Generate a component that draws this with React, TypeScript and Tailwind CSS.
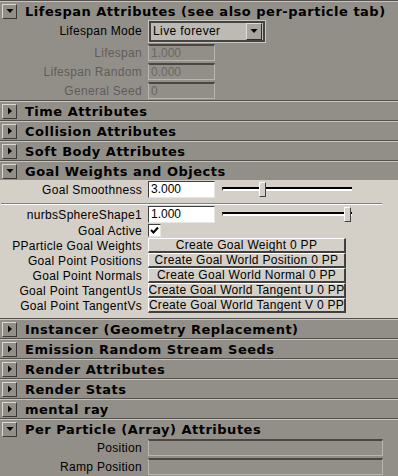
import React from 'react';

const panel = 'bg-[#928f89]';

function Arrow({ open }: { open: boolean }) {
  return (
    <svg width="8" height="8" viewBox="0 0 8 8">
      {open ? <path d="M0.5 2h7L4 6z" fill="#000" /> : <path d="M2 0.5v7L6 4z" fill="#000" />}
    </svg>
  );
}

function Header({ title, open = false }: { title: string; open?: boolean }) {
  return (
    <div className={`h-[20px] border-t border-[#55524e] ${panel}`}>
      <div className="h-[19px] border-t border-[#c7c4be] flex items-center pl-[2px]">
        <div className="w-[15px] h-[15px] border border-t-[#dcd9d3] border-l-[#dcd9d3] border-b-[#3a3835] border-r-[#3a3835] flex items-center justify-center">
          <Arrow open={open} />
        </div>
        <span className="ml-[8px] font-['DejaVu_Sans',Verdana,sans-serif] text-[13px] font-bold tracking-[0.5px] text-black leading-none whitespace-nowrap">
          {title}
        </span>
      </div>
    </div>
  );
}

function Row({ label, dim = false, h = 'h-[17px]', children }: { label: string; dim?: boolean; h?: string; children?: React.ReactNode }) {
  return (
    <div className={`flex items-center ${h}`}>
      <div className={`w-[142px] text-right whitespace-nowrap tracking-[0.3px] ${dim ? 'text-[#605d59]' : 'text-black'}`}>
        {label}
      </div>
      <div className="ml-[6px] h-full flex items-center">{children}</div>
    </div>
  );
}

function DimField({ value = '', w = 'w-[67px]' }: { value?: string; w?: string }) {
  return (
    <div className={`${w} h-[17px] border-t-2 border-t-[#4a4743] border-l border-l-[#b9b6b0] border-r border-r-[#b9b6b0] border-b border-b-[#b9b6b0] text-[#6a6762] pl-[2px] leading-[14px]`}>
      {value}
    </div>
  );
}

function WhiteField({ value }: { value: string }) {
  return (
    <div className="w-[67px] h-[17px] bg-white border border-t-[#404040] border-l-[#404040] border-r-[#e8e6e1] border-b-[#e8e6e1] pl-[2px] leading-[15px] text-black">
      {value}
    </div>
  );
}

function Slider({ pos }: { pos: number }) {
  return (
    <div className="relative w-[130px] h-[16px] ml-[7px]">
      <div className="absolute left-0 right-0 top-[5px] h-[4px] border-t-2 border-t-black border-l border-l-[#404040] bg-white border-b border-b-white" />
      <div
        className="absolute top-0 w-[7px] h-[15px] bg-[#d4d0c8] border border-t-white border-l-white border-r-[#404040] border-b-[#404040]"
        style={{ left: pos }}
      />
    </div>
  );
}

function Btn({ children }: { children: React.ReactNode }) {
  return (
    <div className="w-[198px] h-[15px] bg-[#d4d0c8] border border-t-white border-l-white border-r-2 border-b-2 border-r-[#404040] border-b-[#404040] flex items-center justify-center overflow-hidden whitespace-nowrap text-black tracking-[0.3px] leading-none">
      {children}
    </div>
  );
}

export default function App() {
  return (
    <div className={`w-[398px] h-[476px] overflow-hidden ${panel} font-['Liberation_Sans',Arial,sans-serif] text-[12px]`}>
      <Header title="Lifespan Attributes (see also per-particle tab)" open />
      <div className="flex flex-col gap-[2px] pb-[1px]">
        <Row label="Lifespan Mode" h="h-[22px]">
          <div className="w-[118px] h-[23px] border border-[#c9c6c0] flex">
            <div className="flex-1 flex items-center bg-[#bdbab4] border-2 border-[#444]">
              <span className="pl-[2px] text-black tracking-[0.4px]">Live forever</span>
              <div className="ml-auto mr-[1px] w-[16px] h-[17px] bg-[#a8a59f] border border-t-[#e0ddd7] border-l-[#e0ddd7] border-r-[#2f2d2a] border-b-[#2f2d2a] flex items-center justify-center">
                <Arrow open />
              </div>
            </div>
          </div>
        </Row>
        <Row label="Lifespan" dim>
          <DimField value="1.000" />
        </Row>
        <Row label="Lifespan Random" dim>
          <DimField value="0.000" />
        </Row>
        <Row label="General Seed" dim>
          <DimField value="0" />
        </Row>
      </div>
      <Header title="Time Attributes" />
      <Header title="Collision Attributes" />
      <Header title="Soft Body Attributes" />
      <Header title="Goal Weights and Objects" open />
      <div className="bg-[#d4d0c8] pt-[1px] h-[138px] flex flex-col">
        <Row label="Goal Smoothness">
          <WhiteField value="3.000" />
          <Slider pos={37} />
        </Row>
        <div className="mt-[5px] mb-[1px] ml-[1px] w-[381px] border-t border-t-[#808080] border-b border-b-white" />
        <Row label="nurbsSphereShape1">
          <WhiteField value="1.000" />
          <Slider pos={122} />
        </Row>
        <Row label="Goal Active" h="h-[15px]">
          <div className="w-[13px] h-[13px] bg-white border border-t-[#404040] border-l-[#404040] border-r-[#e8e6e1] border-b-[#e8e6e1] flex items-center justify-center">
            <svg width="9" height="9" viewBox="0 0 9 9">
              <path d="M1 4l2.5 2.5L8 1.5" stroke="#000" strokeWidth="2" fill="none" />
            </svg>
          </div>
        </Row>
        <Row label="PParticle Goal Weights" h="h-[15px]">
          <Btn>Create Goal Weight 0 PP</Btn>
        </Row>
        <Row label="Goal Point Positions" h="h-[15px]">
          <Btn>Create Goal World Position 0 PP</Btn>
        </Row>
        <Row label="Goal Point Normals" h="h-[15px]">
          <Btn>Create Goal World Normal 0 PP</Btn>
        </Row>
        <Row label="Goal Point TangentUs" h="h-[15px]">
          <Btn>Create Goal World Tangent U 0 PP</Btn>
        </Row>
        <Row label="Goal Point TangentVs" h="h-[15px]">
          <Btn>Create Goal World Tangent V 0 PP</Btn>
        </Row>
      </div>
      <Header title="Instancer (Geometry Replacement)" />
      <Header title="Emission Random Stream Seeds" />
      <Header title="Render Attributes" />
      <Header title="Render Stats" />
      <Header title="mental ray" />
      <Header title="Per Particle (Array) Attributes" open />
      <div className="flex flex-col gap-[2px] pt-[1px]">
        <Row label="Position">
          <DimField w="w-[235px]" />
        </Row>
        <Row label="Ramp Position">
          <DimField w="w-[235px]" />
        </Row>
      </div>
    </div>
  );
}
